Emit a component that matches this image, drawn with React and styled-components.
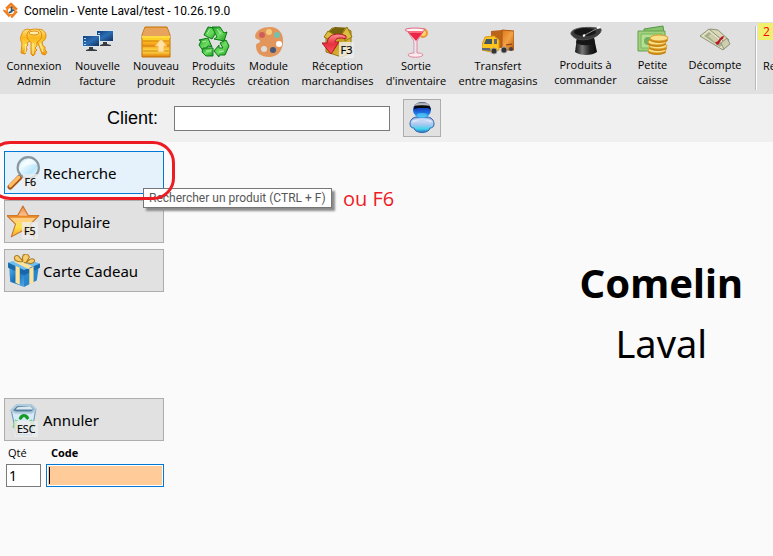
import React, { useState } from 'react';
import styled, { createGlobalStyle } from 'styled-components';

const GlobalStyle = createGlobalStyle`
  * {
    box-sizing: border-box;
  }
  body {
    margin: 0;
    background: #fafafa;
    color: #000;
    font-family: "Open Sans", "Noto Sans", sans-serif;
    font-size: 12px;
    overflow: hidden;
  }
`;

const Window = styled.div`
  display: flex;
  flex-direction: column;
  min-height: 100vh;
`;

const TitleBar = styled.header`
  display: flex;
  align-items: center;
  gap: 4px;
  height: 22px;
  padding-left: 2px;
  background: #fff;
  font-family: Roboto, sans-serif;
  white-space: nowrap;
`;

const Toolbar = styled.nav`
  display: flex;
  height: 72px;
  padding-left: 5px;
  background: #e0e0e0;
  overflow: hidden;
`;

const ToolGroup = styled.div`
  display: flex;
  flex-shrink: 0;
  gap: ${(p) => p.$gap}px;
  padding-top: ${(p) => p.$top}px;
  margin-right: ${(p) => p.$after}px;
`;

const Tool = styled.button`
  display: flex;
  flex-direction: column;
  align-items: center;
  width: ${(p) => p.$width}px;
  height: 64px;
  padding: 0;
  border: 0;
  background: none;
  color: #000;
  font: 11px/15px "Open Sans", "Noto Sans", sans-serif;
  white-space: pre;
  text-align: center;
`;

const Divider = styled.div`
  flex: 0 0 2px;
  height: 64px;
  margin-top: 4px;
  border-left: 1px solid #b8b8b8;
  background: #fff;
`;

const LastTool = styled.div`
  display: flex;
  flex-direction: column;
  gap: 18px;
  padding: 1px 0 0 1px;
`;

const Counter = styled.span`
  width: 48px;
  height: 17px;
  padding-left: 5px;
  background: #f0f06e;
  color: #f00;
  line-height: 17px;
`;

const CutLabel = styled.span`
  padding-left: 5px;
  font-size: 11px;
  line-height: 15px;
`;

const ClientBar = styled.section`
  display: flex;
  align-items: center;
  height: 48px;
  padding-left: 107px;
  background: #f0f0f0;
`;

const ClientLabel = styled.label`
  width: 67px;
  font: 18px "Liberation Sans", sans-serif;
`;

const ClientInput = styled.input`
  width: 216px;
  height: 25px;
  margin-right: 13px;
  padding: 0 4px;
  border: 1px solid #7a7a7a;
  background: #fff;
`;

const UserButton = styled.button`
  display: flex;
  align-items: center;
  justify-content: center;
  width: 38px;
  height: 38px;
  padding: 0;
  border: 1px solid #adadad;
  background: #e1e1e1;
`;

const Content = styled.main`
  display: flex;
  flex: 1;
  justify-content: space-between;
`;

const Sidebar = styled.aside`
  display: flex;
  flex-direction: column;
  gap: 6px;
  width: 164px;
  padding: 9px 0 0 4px;
`;

const Anchor = styled.div`
  position: relative;
`;

const SideButton = styled.button`
  display: flex;
  align-items: center;
  gap: 2px;
  width: 100%;
  height: 43px;
  padding: 0 2px;
  border: 1px solid ${(p) => (p.$active ? '#0078d7' : '#adadad')};
  background: ${(p) => (p.$active ? '#e5f1fb' : '#e1e1e1')};
  color: #000;
  font: 15px "Noto Sans", sans-serif;
  text-align: left;
  white-space: nowrap;
`;

const Highlight = styled.div`
  position: absolute;
  z-index: 2;
  top: -10px;
  left: -16px;
  width: 187px;
  height: 59px;
  border: 3px solid #ed1c24;
  border-radius: 22px;
  pointer-events: none;
`;

const Tooltip = styled.div`
  position: absolute;
  z-index: 1;
  top: 37px;
  left: 139px;
  width: 189px;
  height: 20px;
  padding-left: 5px;
  border: 1px solid #767676;
  background: #fff;
  box-shadow: 3px 3px 2px #8c8c8c;
  color: #575757;
  font: 12px/18px Roboto, sans-serif;
  white-space: nowrap;
`;

const Note = styled.div`
  position: absolute;
  top: 34px;
  left: 339px;
  color: #ed1c24;
  font-size: 20px;
  line-height: 27px;
  white-space: nowrap;
`;

const Entry = styled.div`
  display: flex;
  flex-direction: column;
  margin-top: 100px;
  gap: 3px;
`;

const Fields = styled.div`
  display: flex;
  gap: 5px;
  padding-left: 2px;
`;

const Field = styled.label`
  display: flex;
  flex-direction: column;
  gap: 3px;
  flex: ${(p) => (p.$grow ? '1' : '0 0 35px')};
  min-width: 0;
  font-size: 11px;
  font-weight: ${(p) => (p.$grow ? 700 : 400)};
  line-height: 17px;
`;

const Caption = styled.span`
  padding-left: ${(p) => p.$indent}px;
`;

const FieldInput = styled.input`
  width: 100%;
  height: 23px;
  padding: 0 2px;
  border: 1px solid #7a7a7a;
  background: #fff;
  color: #000;
  font: 14px "Noto Sans", sans-serif;
  outline: none;
`;

const CodeInput = styled(FieldInput)`
  border-color: #0078d7;
  box-shadow: inset 0 0 0 1px #fff;
  background: linear-gradient(#000, #000) 2px 2px / 1px 17px no-repeat, #ffcc99;
  caret-color: transparent;
`;

const Store = styled.div`
  padding: 111px 30px 0 0;
  text-align: center;
  font: 38px/60px "Noto Sans", sans-serif;
`;

const StoreName = styled.h1`
  margin: 0;
  font-size: 40px;
  font-weight: 700;
  line-height: 60px;
`;

const Icon = styled.svg`
  flex-shrink: 0;
`;

const HiddenSvg = styled.svg`
  position: absolute;
`;

const Svg = ({ size = 32, children }) => (
  <Icon width={size} height={size} viewBox="0 0 32 32" aria-hidden="true">
    {children}
  </Icon>
);

const KeyTag = ({ x, y, w, size = 10, children }) => (
  <>
    <rect x={x} y={y} width={w} height={32 - y} fill="#eee" fillOpacity=".8" />
    <text x={x + w / 2} y="28" fontSize={size} textAnchor="middle" fontFamily="Open Sans" fill="#000" stroke="#000" strokeWidth=".2">
      {children}
    </text>
  </>
);

const Gradient = ({ id, stops, x2 = 0, y2 = 1 }) => (
  <linearGradient id={id} x1="0" y1="0" x2={x2} y2={y2}>
    {stops.map((color, i) => (
      <stop key={i} offset={i / (stops.length - 1)} stopColor={color} />
    ))}
  </linearGradient>
);

const Gradients = () => (
  <HiddenSvg width="0" height="0" aria-hidden="true">
    <defs>
      <Gradient id="gold" stops={['#ffe38a', '#f8b61c', '#ffd84a', '#e98f08']} />
      <Gradient id="screen" x2={1} stops={['#123e78', '#2c6eb4', '#11305f']} />
      <Gradient id="carton" stops={['#f7a233', '#f28f16', '#ffd626', '#f39b15', '#ffe04a', '#e27b08']} />
      <Gradient id="green" x2={1} stops={['#1f9c26', '#6fdc62', '#17961e']} />
      <Gradient id="red" stops={['#ff9296', '#e8303f', '#ff5961']} />
      <Gradient id="box" x2={1} stops={['#e9cf50', '#c79b1d', '#f0db6b']} />
      <Gradient id="truck" x2={1} stops={['#d97819', '#f3a247', '#b9570b']} />
      <Gradient id="hat" x2={1} y2={0} stops={['#111', '#777', '#222', '#080808']} />
      <Gradient id="head" stops={['#0b2a9c', '#1238b8', '#1f6fe0', '#35c3f2']} />
      <Gradient id="body" stops={['#6f97dd', '#c9daf6', '#a5c6ee', '#45d6ee', '#2a7cc4']} />
      <Gradient id="lens" x2={1} stops={['#8fd2f4', '#e9faff', '#bce7fb', '#f7fdff']} />
      <Gradient id="star" stops={['#e9853c', '#ffc89b', '#ffe24a', '#f7a52c']} />
      <Gradient id="gift" x2={1} stops={['#55b2ee', '#1771bd', '#55abe5']} />
      <Gradient id="hair" stops={['#777', '#c4c4c4', '#8f8f8f']} />
    </defs>
  </HiddenSvg>
);

const LogoIcon = () => (
  <Svg size={18}>
    <path d="m16 3 12 12-12 13L4 15Z" fill="#fff" stroke="#f07c1e" strokeWidth="4" strokeDasharray="15 4" strokeLinejoin="round" />
    <circle cx="16" cy="16" r="7" fill="#fff" stroke="#f58220" strokeWidth="3" />
    <path d="M17 8v9l-5 2M17 16l4-2" fill="none" stroke="#285a78" strokeWidth="3" />
  </Svg>
);

const KeysIcon = () => (
  <Svg>
    <g fill="url(#gold)" stroke="#e08e0a" strokeWidth="1">
      <path d="M4 8c0-4 5-6 9-4 3 2 3 8-1 11l-3 2 1 2-2 2 1 2-2 5-4-1 1-10C2 14 2 11 4 8Z" />
      <path d="M18 4c4-2 9 0 10 5 0 4-2 6-4 7l1 4 2 1v3l2 2-2 3-3-1-4-11C15 14 14 7 18 4Z" />
      <path d="M10 6c3-4 11-4 13 0 2 5-1 9-4 10v4l-2 2 2 2-2 2v2l-2 2-2-2V16C9 14 8 10 10 6Z" />
    </g>
    <ellipse cx="16" cy="7" rx="5" ry="2" fill="#ffeaa8" stroke="#e08e0a" />
    <path d="M8 18 7 27M15 17v11M22 17l3 9" stroke="#fff1a2" strokeWidth="1" />
  </Svg>
);

const ScreensIcon = () => (
  <Svg>
    {[[14, 4], [0, 9]].map(([x, y]) => (
      <g key={x} transform={`translate(${x} ${y})`}>
        <path d="M0 0h18v12H0Z" fill="#dce5e9" />
        <path d="M1 1h16v10H1Z" fill="url(#screen)" />
        <path d="M7 12h4v2l4 1v1H4v-1l3-1Z" fill="#343d42" />
        <path d="M3 3v1M3 6v1M3 9v1" stroke="#a9daff" strokeWidth="2" />
      </g>
    ))}
  </Svg>
);

const CartonIcon = () => (
  <Svg>
    <path d="M5 1h22l3 8v22H2V9Z" fill="url(#carton)" stroke="#bd730c" />
    <path d="M5 2h22l3 8H2Z" fill="#e8a35c" />
    <path d="M2 10h28v2H2Z" fill="#ffdc40" />
    <path d="M3 15h26M3 20h26M3 25h26" stroke="#cd7913" />
    <path d="m21 13 6 7h-3v6h-6v-6h-3Z" fill="#ffe1a5" stroke="#f9bd53" />
  </Svg>
);

const RecycleIcon = () => (
  <Svg>
    <g fill="url(#green)" stroke="#087a12" strokeWidth="1" strokeLinejoin="round">
      <path d="m10 1 7 1 2 3-5 8-8-4Z" />
      <path d="M14 1h8l4 6 3-1-3 9-10-2 3-2-4-8Z" />
      <path d="m1 14 9-2 4 9-4-1-4 6-5-7 2-4Z" />
      <path d="M5 22h10v8H8l-4-4Z" />
      <path d="m22 17 6-3 3 6-4 9h-6v2l-5-6 5-6v3h4Z" />
    </g>
    <path d="m12 3-3 5M4 16l4-1M8 25h5M21 26l5-1M19 3l4 5" stroke="#c8ffbe" strokeWidth="1" opacity=".8" />
  </Svg>
);

const PaletteIcon = () => (
  <Svg>
    <path d="M17 1c9 0 14 7 13 16-1 9-6 14-14 14C8 31 3 27 3 20c0-4 4-2 4-5 0-2-5-1-5-5C3 4 10 1 17 1Z" fill="#e3965b" />
    <circle cx="16" cy="6" r="3" fill="#f3cc7b" />
    <circle cx="9" cy="9" r="3" fill="#d05d59" />
    <circle cx="24" cy="9" r="3" fill="#72c1ad" />
    <circle cx="26" cy="18" r="3" fill="#fff" />
    <circle cx="11" cy="23" r="3" fill="#ddd" />
    <circle cx="20" cy="24" r="3" fill="#465978" />
  </Svg>
);

const ReceptionIcon = () => (
  <Svg>
    <path d="m4 9 6-7h14l5 3v22l-9 4-16-5Z" fill="url(#box)" stroke="#957715" />
    <path d="m6 6 7-5 10 1-3 6-10 2Z" fill="#75650f" />
    <path d="m20 8 5-7 5 10-7 4ZM6 5 2 11l8 4 3-6Z" fill="#ddbd3e" stroke="#957715" />
    <path d="M24 10C19 7 9 7 6 13l-1 4H0l9 11 8-12h-4c0-4 5-5 11-3Z" fill="url(#red)" stroke="#ad1826" />
    <KeyTag x={17} y={16} w={15} size={11}>F3</KeyTag>
  </Svg>
);

const CocktailIcon = () => (
  <Svg>
    <circle cx="23" cy="7" r="4" fill="#ffd072" stroke="#eb9733" strokeWidth="2" />
    <path d="M6 3h19l-8 12v12c4 0 6 1 6 2-1 3-14 3-15 0 0-1 3-2 6-2V15Z" fill="#fce8ed" stroke="#dc879c" />
    <path d="M8 6h15l-7 9Z" fill="#ed2445" />
    <ellipse cx="15" cy="4" rx="10" ry="2" fill="#fff4f5" stroke="#df6b82" />
    <path d="M9 6h13" stroke="#ff6a7c" strokeWidth="2" />
    <path d="M15 15v13" stroke="#d8dfef" />
  </Svg>
);

const TruckIcon = () => (
  <Svg>
    <path d="m9 5 11-1v18H9Z" fill="#bb6319" />
    <path d="m20 4 12 1v19H20Z" fill="url(#truck)" stroke="#ad570f" />
    <path d="m0 19 3-8 9-1 5 4v10l-8 2-9-2Z" fill="#ffc51d" stroke="#dc9915" />
    <path d="m2 18 2-5h6v5Z" fill="#42565f" />
    <path d="M12 13h3v5h-3M0 22h8l1 3-9-1Z" fill="#616b6f" />
    <circle cx="12" cy="25" r="3" fill="#333" stroke="#999" />
    <circle cx="22" cy="24" r="3" fill="#333" stroke="#999" />
    <circle cx="29" cy="23" r="2" fill="#444" />
    <path d="m24 19 6-1" stroke="#7e3b0a" />
  </Svg>
);

const HatIcon = () => (
  <Svg>
    <path d="M7 13h17l3 14c-5 4-17 4-22 0Z" fill="url(#hat)" />
    <path d="M7 13h17l1 5c-5 3-14 3-19 0Z" fill="#161616" />
    <path d="M1 9C0 2 22 1 31 4c2 8-23 17-30 5Z" fill="#3a3a3a" stroke="#4d4d4d" />
    <ellipse cx="15" cy="7" rx="11" ry="4" fill="#151515" />
    <path d="m13 11 17-9" stroke="#888" strokeWidth="1" />
    <path d="m13 11 2-1M27 3l3-1" stroke="#fff" strokeWidth="2" />
  </Svg>
);

const CashIcon = () => (
  <Svg>
    <path d="m7 4 19-3 2 16-20 2Z" fill="#88c46d" stroke="#579447" />
    <path d="M1 6h27v20H1Z" fill="#a2d17c" stroke="#65a150" />
    <path d="M4 9h21v14H4Z" fill="#b7df91" stroke="#78b661" />
    <circle cx="11" cy="16" r="4" fill="#75ae60" />
    {[[20, 25], [21, 21], [20, 17], [22, 13]].map(([x, y]) => (
      <g key={y}>
        <ellipse cx={x} cy={y + 2} rx="9" ry="3" fill="#c58211" />
        <ellipse cx={x} cy={y} rx="9" ry="3" fill="#fae08b" stroke="#dc9d25" />
      </g>
    ))}
  </Svg>
);

const BillsIcon = () => (
  <Svg>
    <path d="m11 4 8 1 11 10-5 6L9 10Z" fill="#d8d7b8" stroke="#8f9277" />
    <path d="m1 11 9-7 19 16-5 5Z" fill="#e0dfc2" stroke="#8b9275" />
    <path d="m5 11 5-4 14 12-3 3Z" fill="#a8af8c" />
    <path d="m9 11 3-2 9 8-3 2Z" fill="#ced0ab" />
    <path d="m22 18 6-5 3 6-6 5Z" fill="#d0ceb0" stroke="#8f9277" />
    <path d="M16 17c4 1 4-6 9-6l-1 3c-3 0-3 6-6 6Z" fill="#b91b29" />
  </Svg>
);

const UserIcon = () => (
  <Svg>
    <path d="M11 15c-4 0-7 3-7 7 0 3 2 4 4 4 1 6 15 6 16 0 2 0 4-1 4-4 0-4-3-7-7-7Z" fill="url(#body)" stroke="#3461aa" />
    <ellipse cx="16" cy="8" rx="9" ry="8" fill="url(#head)" />
    <path d="M8 7c0-4 4-6 8-6s8 2 9 7l-3-2H12Z" fill="#0a0a0a" />
    <path d="M8 4c3-5 13-5 16 0-5-1-11-1-16 0Z" fill="url(#hair)" />
    <ellipse cx="16" cy="13" rx="5" ry="2" fill="#5fd4f8" opacity=".6" />
    <path d="M7 20c2-2 5-3 9-3s7 1 9 3" fill="none" stroke="#fff" strokeWidth="2" opacity=".4" />
  </Svg>
);

const SearchIcon = () => (
  <Svg size={34}>
    <path d="m3 29 9-9" stroke="#a95616" strokeWidth="5" strokeLinecap="round" />
    <path d="m3 28 8-8" stroke="#ffbd65" strokeWidth="3" strokeLinecap="round" />
    <circle cx="20" cy="11" r="10" fill="url(#lens)" stroke="#8a969c" strokeWidth="2" />
    <path d="M12 11c1-9 13-10 16-3-5-1-9 1-16 3Z" fill="#fff" opacity=".6" />
    <KeyTag x={15} y={17} w={14}>F6</KeyTag>
  </Svg>
);

const StarIcon = () => (
  <Svg size={34}>
    <path d="m15 1 5 9h10l-8 8 4 12-11-6-11 6 4-12-8-8h10Z" fill="url(#star)" stroke="#c6742f" strokeLinejoin="round" />
    <path d="M2 11h27" stroke="#e78824" strokeWidth="2" />
    <KeyTag x={14} y={16} w={15}>F5</KeyTag>
  </Svg>
);

const GiftIcon = () => (
  <Svg size={34}>
    <path d="m2 12 14 5v14L3 26Z" fill="url(#gift)" />
    <path d="m16 17 14-6-2 14-12 6Z" fill="#2886ce" />
    <path d="m1 8 14-4 16 5-15 7Z" fill="#6dbff1" />
    <path d="m1 8 15 7v5L1 13Zm15 7 15-6v4l-15 7Z" fill="#1668aa" />
    <path d="m8 11 4 2v16l-4-2ZM21 13l4-2v16l-4 2ZM6 7l14 7 5-2L11 6Z" fill="#ffe39a" />
    <path d="M15 7C4 9 6-1 11 2l4 5c-2-9 5-8 6-4l-3 5c7-7 11-1 5 1l-7-1" fill="#f7cf6c" stroke="#ac781d" />
  </Svg>
);

const CancelIcon = () => (
  <Svg size={34}>
    <path d="m4 7 23-1-4 24H9Z" fill="#d6ebf7" stroke="#6b9ab9" />
    <path d="m4 7 5-5h14l4 4-4 3H8Z" fill="#547c9c" stroke="#b0cbdc" strokeWidth="2" />
    <path d="m10 4 12-1 3 3H8Z" fill="#d9e9f0" />
    <path d="M11 15c1-6 8-6 10-1l-2 2-3-3-3 3Z" fill="#169b27" />
    <path d="m9 16-2 6 5 1M22 16l3 5-4 3" fill="none" stroke="#88cd87" strokeWidth="3" />
    <KeyTag x={7} y={17} w={22}>ESC</KeyTag>
  </Svg>
);

const mainTools = [
  { label: 'Connexion\nAdmin', width: 58, icon: <KeysIcon /> },
  { label: 'Nouvelle\nfacture', width: 47, icon: <ScreensIcon /> },
  { label: 'Nouveau\nproduit', width: 48, icon: <CartonIcon /> },
  { label: 'Produits\nRecyclés', width: 45, icon: <RecycleIcon /> },
  { label: 'Module\ncréation', width: 43, icon: <PaletteIcon /> },
  { label: 'Réception\nmarchandises', width: 73, icon: <ReceptionIcon /> },
  { label: "Sortie\nd'inventaire", width: 62, icon: <CocktailIcon /> },
  { label: 'Transfert\nentre magasins', width: 80, icon: <TruckIcon /> },
];

const cashTools = [
  { label: 'Produits à\ncommander', width: 65, icon: <HatIcon /> },
  { label: 'Petite\ncaisse', width: 31, icon: <CashIcon /> },
  { label: 'Décompte\nCaisse', width: 56, icon: <BillsIcon /> },
];

const renderTools = (tools) =>
  tools.map((tool) => (
    <Tool key={tool.label} type="button" $width={tool.width}>
      {tool.icon}
      {tool.label}
    </Tool>
  ));

const App = () => {
  const [client, setClient] = useState('');
  const [quantity, setQuantity] = useState('1');
  const [code, setCode] = useState('');

  return (
    <Window>
      <GlobalStyle />
      <Gradients />
      <TitleBar>
        <LogoIcon />
        <span>Comelin - Vente Laval/test - 10.26.19.0</span>
      </TitleBar>
      <Toolbar>
        <ToolGroup $gap={11} $top={4} $after={15}>{renderTools(mainTools)}</ToolGroup>
        <ToolGroup $gap={19} $top={3} $after={12}>{renderTools(cashTools)}</ToolGroup>
        <Divider />
        <LastTool>
          <Counter>2</Counter>
          <CutLabel>Re</CutLabel>
        </LastTool>
      </Toolbar>
      <ClientBar>
        <ClientLabel htmlFor="client">Client:</ClientLabel>
        <ClientInput id="client" value={client} onChange={(e) => setClient(e.target.value)} />
        <UserButton type="button" aria-label="Client"><UserIcon /></UserButton>
      </ClientBar>
      <Content>
        <Sidebar>
          <Anchor>
            <SideButton type="button" $active><SearchIcon />Recherche</SideButton>
            <Tooltip role="tooltip">Rechercher un produit (CTRL + F)</Tooltip>
            <Highlight />
            <Note>ou F6</Note>
          </Anchor>
          <SideButton type="button"><StarIcon />Populaire</SideButton>
          <SideButton type="button"><GiftIcon />Carte Cadeau</SideButton>
          <Entry>
            <SideButton type="button"><CancelIcon />Annuler</SideButton>
            <Fields>
              <Field>
                <Caption $indent={2}>Qté</Caption>
                <FieldInput value={quantity} onChange={(e) => setQuantity(e.target.value)} />
              </Field>
              <Field $grow>
                <Caption $indent={5}>Code</Caption>
                <CodeInput autoFocus value={code} onChange={(e) => setCode(e.target.value)} />
              </Field>
            </Fields>
          </Entry>
        </Sidebar>
        <Store>
          <StoreName>Comelin</StoreName>
          Laval
        </Store>
      </Content>
    </Window>
  );
};

export default App;
